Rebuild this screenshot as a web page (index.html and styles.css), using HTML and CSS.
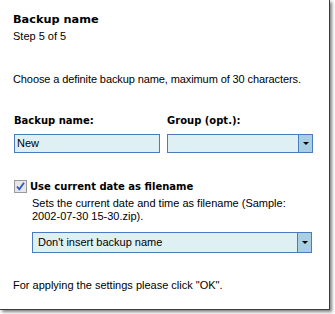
FILE: index.html
```
<!DOCTYPE html>
<html>
<head>
<meta charset="utf-8">
<link rel="stylesheet" href="styles.css">
</head>
<body>
<div class="window">
  <div class="title">Backup name</div>
  <div class="step">Step 5 of 5</div>
  <div class="intro">Choose a definite backup name, maximum of 30 characters.</div>
  <div class="fields">
    <div class="field">
      <div class="label">Backup name:</div>
      <div class="input">New</div>
    </div>
    <div class="field">
      <div class="label">Group (opt.):</div>
      <div class="input combo"><span class="value"></span><span class="btn"><span class="arrow"></span></span></div>
    </div>
  </div>
  <div class="check-row">
    <span class="checkbox"><svg width="11" height="11" viewBox="0 0 11 11"><path d="M2 5.5 L4.3 8.3 L9 1.8" fill="none" stroke="#2f56c8" stroke-width="1.8"/></svg></span>
    <span class="check-label">Use current date as filename</span>
  </div>
  <div class="desc">Sets the current date and time as filename (Sample:<br>2002-07-30 15-30.zip).</div>
  <div class="input combo wide"><span class="value">Don't insert backup name</span><span class="btn"><span class="arrow"></span></span></div>
  <div class="footer">For applying the settings please click "OK".</div>
</div>
</body>
</html>
```
FILE: styles.css
```
html, body {
  margin: 0;
  padding: 0;
  background: #fff;
  overflow: hidden;
}
body {
  width: 335px;
  height: 314px;
  font-family: "Liberation Sans", Arial, sans-serif;
  font-size: 11px;
  color: #000;
}
.window {
  box-sizing: border-box;
  width: 330px;
  height: 310px;
  background: #fff;
  border-right: 1px solid #3c3c3c;
  border-bottom: 1px solid #3c3c3c;
  box-shadow: 2px 2px 3px rgba(0,0,0,0.5);
  padding: 12px 0 0 13px;
}
.title {
  font-family: "DejaVu Sans", sans-serif;
  font-weight: bold;
  font-size: 11.3px;
  line-height: 16px;
}
.step {
  line-height: 14px;
  margin-top: 1px;
}
.intro {
  line-height: 14px;
  margin-top: 29px;
  letter-spacing: -0.1px;
}
.fields {
  display: flex;
  gap: 7px;
  margin-top: 28px;
  margin-left: 1px;
}
.field {
  width: 146px;
}
.label {
  font-family: "DejaVu Sans", sans-serif;
  font-weight: bold;
  font-size: 10px;
  line-height: 14px;
  margin-bottom: 6px;
}
.input {
  box-sizing: border-box;
  height: 19px;
  background: #dff0f4;
  border: 1px solid #4a7bbd;
  padding-left: 2px;
  line-height: 17px;
  display: flex;
}
.combo {
  padding-left: 0;
}
.combo .value {
  flex: 1;
  padding-left: 5px;
}
.btn {
  width: 13px;
  background: #a9d0e2;
  border-left: 1px solid #4a7bbd;
  display: flex;
  align-items: center;
  justify-content: center;
}
.arrow {
  width: 0;
  height: 0;
  border-left: 3px solid transparent;
  border-right: 3px solid transparent;
  border-top: 3px solid #000;
}
.check-row {
  display: flex;
  align-items: center;
  margin-top: 27px;
  margin-left: 1px;
  height: 13px;
}
.checkbox {
  box-sizing: border-box;
  width: 13px;
  height: 13px;
  border: 1px solid #9a9a9a;
  background: #e6e6e6;
  display: flex;
  align-items: center;
  justify-content: center;
  margin-right: 3px;
}
.check-label {
  font-family: "DejaVu Sans", sans-serif;
  font-weight: bold;
  font-size: 10px;
}
.desc {
  margin-top: 4px;
  margin-left: 19px;
  line-height: 13px;
}
.wide {
  margin-top: 9px;
  margin-left: 19px;
  width: 280px;
  height: 21px;
  line-height: 19px;
}
.footer {
  margin-top: 25px;
  line-height: 14px;
}
```
